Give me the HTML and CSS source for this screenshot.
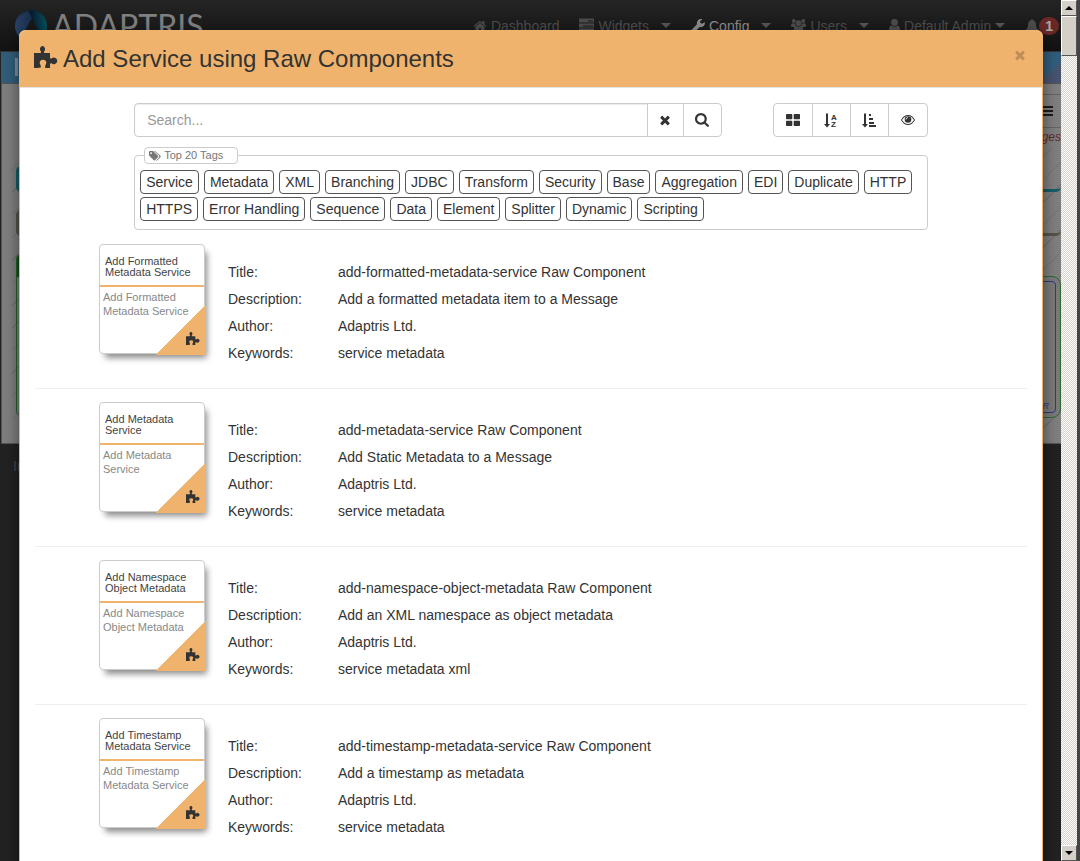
FILE: index.html
```
<!DOCTYPE html>
<html lang="en">
<head>
<meta charset="utf-8">
<title>Add Service using Raw Components</title>
<link rel="stylesheet" href="styles.css">
</head>
<body>
<svg class="defs" aria-hidden="true">
  <symbol id="puzzle" viewBox="0 0 24 22">
    <path d="M0 7h6.500q1-.2.500-1.500Q5.500 4 6 2.200 6.800 0 8.500 0t2.500 2.200Q11.500 4 10 5.500q-.5 1.300.5 1.500H16v4.500q.2 1.500 1.500 1 1.500-1.300 3.500-.7 2.300.8 2.300 3T21 18q-2 .6-3.500-.7-1.300-.5-1.500 1V22h-4.800v-1.500q-.2-1 .8-2.500 .8-1.700-.2-3-1-1.200-2.800-1.200T6.200 15q-1 1.300-.2 3 1 1.500.8 2.500V21.500Q3 22 0 22z"/>
  </symbol>
  <symbol id="times" viewBox="0 0 1792 1792"><path d="M1490 1322q0 40-28 68l-136 136q-28 28-68 28t-68-28l-294-294-294 294q-28 28-68 28t-68-28l-136-136q-28-28-28-68t28-68l294-294-294-294q-28-28-28-68t28-68l136-136q28-28 68-28t68 28l294 294 294-294q28-28 68-28t68 28l136 136q28 28 28 68t-28 68l-294 294 294 294q28 28 28 68z"/></symbol>
  <symbol id="search" viewBox="0 0 1792 1792"><path d="M1152 704q0-185-131.500-316.500t-316.500-131.500-316.500 131.500-131.500 316.500 131.500 316.500 316.500 131.500 316.500-131.500 131.500-316.500zm512 832q0 52-38 90t-90 38q-54 0-90-38l-343-342q-179 124-399 124-143 0-273.500-55.500t-225-150-150-225-55.500-273.500 55.500-273.500 150-225 225-150 273.500-55.500 273.500 55.500 225 150 150 225 55.500 273.500q0 220-124 399l343 343q37 37 37 90z"/></symbol>
  <symbol id="home" viewBox="0 0 1792 1792"><path d="M1472 992v480q0 26-19 45t-45 19h-384v-384h-256v384h-384q-26 0-45-19t-19-45v-480q0-1 .5-3t.5-3l575-474 575 474q1 2 1 6zm223-69l-62 74q-8 9-21 11h-3q-13 0-21-7l-692-577-692 577q-12 8-24 7-13-2-21-11l-62-74q-8-10-7-23.500t11-21.500l719-599q32-26 76-26t76 26l244 204v-195q0-14 9-23t23-9h192q14 0 23 9t9 23v408l219 182q10 8 11 21.500t-7 23.500z"/></symbol>
  <symbol id="bars" viewBox="0 0 15 14"><path fill-rule="evenodd" d="M0 0h15v4H0zM0 5h15v4H0zM0 10h15v4H0zM9 2v1h5V2zM4 7v1h10V7z"/></symbol>
  <symbol id="wrench" viewBox="0 0 14 14"><path d="M13.700 3.200 11 4.800 9.200 3.800V2l2.400-1.600Q9-.6 7 1.200 5.400 3 6 5.300L.6 10.700q-.8 1 0 1.900l.8.8q.9.800 1.900 0L8.700 8q2.300.6 4-1 1.600-1.700 1-3.800z"/></symbol>
  <symbol id="users" viewBox="0 0 16 14"><circle cx="3" cy="2.200" r="2.100"/><circle cx="13" cy="2.200" r="2.100"/><circle cx="8" cy="4.500" r="3"/><path d="M0 7.500Q0 4.500 1.500 4.500L4.500 5q0 2 1 2.700Q4 8 3.500 8.500H1q-1 0-1-1zM16 7.500q0-3-1.500-3l-3 .5q0 2-1 2.700 1.500.3 2 .8H15q1 0 1-1zM3 12q0-4.500 2.500-4.500 2.500 1.500 5 0Q13 7.500 13 12q0 2-2 2H5q-2 0-2-2z"/></symbol>
  <symbol id="user" viewBox="0 0 11 14"><circle cx="5.500" cy="3.500" r="3.400"/><path d="M0 11q0-4.500 2.500-4.500 3 2.500 6 0Q11 6.500 11 11q0 2-2 2H2q-2 0-2-2z"/></symbol>
  <symbol id="bell" viewBox="0 0 14 14"><path d="M7 0q1 0 1 1.200Q11 2 11 5.500q0 4 2.500 5.500 0 1-1 1h-11q-1 0-1-1Q3 9.500 3 5.500 3 2 6 1.200 6 0 7 0zM5.500 12.500h3Q8 14 7 14t-1.500-1.500z"/></symbol>
  <symbol id="tags" viewBox="0 0 12 10"><path fill-rule="evenodd" d="M0 .8Q0 0 .8 0H4l5 4.700q.5.600 0 1.200L6 9.300q-.6.500-1.200 0L0 4.500zM2 1.200a.9.900 0 1 0 .1 0z"/><path d="M5 0h1l5.500 4.700q.5.600 0 1.200L8.200 9.500q-.5.400-1 0L10 6.200q.6-.9 0-1.700z"/></symbol>
  <symbol id="grid" viewBox="0 0 14 12"><path d="M.8 0h4.700q.8 0 .8.800v3.700q0 .8-.8.800H.8q-.8 0-.8-.8V.8Q0 0 .8 0zM8.500 0h4.700q.8 0 .8.800v3.700q0 .8-.8.800H8.500q-.8 0-.8-.8V.8q0-.8.800-.8zM.8 6.700h4.700q.8 0 .8.800v3.700q0 .8-.8.800H.8q-.8 0-.8-.8V7.500q0-.8.800-.8zM8.500 6.700h4.700q.8 0 .8.800v3.700q0 .8-.8.800H8.500q-.8 0-.8-.8V7.500q0-.8.800-.8z"/></symbol>
  <symbol id="down" viewBox="0 0 6 14"><path d="M2 0h2v10.500h2L3 14 0 10.500h2z"/></symbol>
  <symbol id="eye" viewBox="0 0 14 10"><path fill-rule="evenodd" d="M7 0q4.300 0 7 5-2.700 5-7 5T0 5q2.700-5 7-5zM7 .9Q3.400 1 1.100 5q2.300 4 5.900 4t5.900-4Q10.600 1 7 .9z"/><circle cx="7" cy="4.500" r="3.300"/><path d="M5 4.500Q5 2.600 7 2.500" fill="none" stroke="#fff" stroke-width=".8"/></symbol>
</svg>

<div class="shell">
  <div class="viewport">
    <div class="app">
      <header class="navbar">
        <a class="brand" href="#">
          <svg class="brand-mark" viewBox="0 0 32 32" aria-hidden="true">
            <defs>
              <linearGradient id="lg1" x1="0" x2="1"><stop offset="0" stop-color="#2b4468"/><stop offset=".5" stop-color="#071a2e"/><stop offset="1" stop-color="#06505f"/></linearGradient>
            </defs>
            <circle cx="16" cy="16" r="16" fill="url(#lg1)"/>
            <path d="M17 8 29 32H5z" fill="#181818"/>
            <path d="M13 1Q4 5 1 16q0 8 4 13L17 8z" fill="#2a4266" fill-opacity=".5"/>
          </svg>
          <span class="brand-name">ADAPTRIS</span>
        </a>
        <nav class="nav">
          <a class="nav-link" href="#"><svg class="ico14"><use href="#home"/></svg>Dashboard</a>
          <a class="nav-link drop" href="#"><svg class="ico15"><use href="#bars"/></svg>Widgets<i class="caret"></i></a>
          <a class="nav-link drop active" href="#"><svg class="ico14"><use href="#wrench"/></svg>Config<i class="caret"></i></a>
          <a class="nav-link drop" href="#"><svg class="ico15"><use href="#users"/></svg>Users<i class="caret"></i></a>
          <a class="nav-link user" href="#"><svg class="ico11"><use href="#user"/></svg>Default Admin<i class="caret"></i></a>
          <a class="nav-link alerts" href="#" aria-label="Notifications"><svg class="ico14"><use href="#bell"/></svg><span class="badge">1</span></a>
        </nav>
      </header>
      <div class="banner"><span class="banner-mark"></span></div>
      <div class="workspace">
        <div class="tools"><button class="menu" aria-label="Menu"></button></div>
        <div class="changes">changes</div>
        <div class="canvas">
          <div class="lane lane-teal"></div>
          <div class="lane lane-olive"></div>
          <div class="lane lane-green"></div>
          <div class="node"><span class="node-name">R</span></div>
        </div>
      </div>
      <footer class="footer">Interlok</footer>
    </div>

    <div class="overlay">
      <section class="modal" role="dialog" aria-labelledby="modal-title">
        <header class="modal-header">
          <h4 class="modal-title" id="modal-title"><svg class="ico-title"><use href="#puzzle"/></svg>Add Service using Raw Components</h4>
          <button class="close" aria-label="Close"><svg class="ico14"><use href="#times"/></svg></button>
        </header>
        <div class="modal-body">
          <div class="filters">
            <div class="filter-row">
              <form class="search">
                <input class="search-input" type="text" placeholder="Search..." aria-label="Search">
                <button class="btn btn-clear" type="button" aria-label="Clear"><svg class="ico14"><use href="#times"/></svg></button>
                <button class="btn btn-find" type="button" aria-label="Search"><svg class="ico15"><use href="#search"/></svg></button>
              </form>
              <div class="views">
                <button class="btn" aria-label="Grid view"><svg class="ico-grid"><use href="#grid"/></svg></button>
                <button class="btn" aria-label="Sort by name"><svg class="ico-sort" viewBox="0 0 14 15"><use href="#down" x="0" y="0" width="6" height="15"/><text x="7" y="7">A</text><text x="7" y="14">Z</text></svg></button>
                <button class="btn" aria-label="Sort by size"><svg class="ico-sort" viewBox="0 0 14 15"><use href="#down" x="0" y="0" width="6" height="15"/><path d="M7 1h2v2H7zM7 5h4v2H7zM7 9h5v2H7zM7 12h7v2H7z"/></svg></button>
                <button class="btn" aria-label="Preview"><svg class="ico-eye"><use href="#eye"/></svg></button>
              </div>
            </div>
            <fieldset class="tags">
              <legend class="tags-legend"><svg class="ico-tags"><use href="#tags"/></svg>Top 20 Tags</legend>
              <div class="tag-list">
                <button class="tag">Service</button><button class="tag">Metadata</button><button class="tag">XML</button><button class="tag">Branching</button><button class="tag">JDBC</button><button class="tag">Transform</button><button class="tag">Security</button><button class="tag">Base</button><button class="tag">Aggregation</button><button class="tag">EDI</button><button class="tag">Duplicate</button><button class="tag">HTTP</button><button class="tag">HTTPS</button><button class="tag">Error Handling</button><button class="tag">Sequence</button><button class="tag">Data</button><button class="tag">Element</button><button class="tag">Splitter</button><button class="tag">Dynamic</button><button class="tag">Scripting</button>
              </div>
            </fieldset>
          </div>

          <div class="list">
            <article class="item">
              <div class="card"><div class="card-title">Add Formatted Metadata Service</div><div class="card-text">Add Formatted Metadata Service</div><span class="corner"><svg class="ico-corner"><use href="#puzzle"/></svg></span></div>
              <dl class="facts"><dt>Title:</dt><dd>add-formatted-metadata-service Raw Component</dd><dt>Description:</dt><dd>Add a formatted metadata item to a Message</dd><dt>Author:</dt><dd>Adaptris Ltd.</dd><dt>Keywords:</dt><dd>service metadata</dd></dl>
            </article>
            <article class="item">
              <div class="card"><div class="card-title">Add Metadata Service</div><div class="card-text">Add Metadata Service</div><span class="corner"><svg class="ico-corner"><use href="#puzzle"/></svg></span></div>
              <dl class="facts"><dt>Title:</dt><dd>add-metadata-service Raw Component</dd><dt>Description:</dt><dd>Add Static Metadata to a Message</dd><dt>Author:</dt><dd>Adaptris Ltd.</dd><dt>Keywords:</dt><dd>service metadata</dd></dl>
            </article>
            <article class="item">
              <div class="card"><div class="card-title">Add Namespace Object Metadata</div><div class="card-text">Add Namespace Object Metadata</div><span class="corner"><svg class="ico-corner"><use href="#puzzle"/></svg></span></div>
              <dl class="facts"><dt>Title:</dt><dd>add-namespace-object-metadata Raw Component</dd><dt>Description:</dt><dd>Add an XML namespace as object metadata</dd><dt>Author:</dt><dd>Adaptris Ltd.</dd><dt>Keywords:</dt><dd>service metadata xml</dd></dl>
            </article>
            <article class="item">
              <div class="card"><div class="card-title">Add Timestamp Metadata Service</div><div class="card-text">Add Timestamp Metadata Service</div><span class="corner"><svg class="ico-corner"><use href="#puzzle"/></svg></span></div>
              <dl class="facts"><dt>Title:</dt><dd>add-timestamp-metadata-service Raw Component</dd><dt>Description:</dt><dd>Add a timestamp as metadata</dd><dt>Author:</dt><dd>Adaptris Ltd.</dd><dt>Keywords:</dt><dd>service metadata</dd></dl>
            </article>
          </div>
        </div>
      </section>
    </div>
  </div>
  <div class="scrollbar" aria-hidden="true">
    <div class="scroll-btn"><i class="arrow-up"></i></div>
    <div class="scroll-thumb"></div>
    <div class="scroll-btn scroll-end"><i class="arrow-down"></i></div>
  </div>
</div>
</body>
</html>
```
FILE: styles.css
```
* { box-sizing: border-box; }
body {
  margin: 0;
  font-family: "Liberation Sans", Arial, sans-serif;
  font-size: 14px;
  line-height: 20px;
  color: #333;
  background: #444;
}
button, input { font: inherit; color: inherit; }
svg { fill: currentColor; flex: none; }
.defs { position: absolute; width: 0; height: 0; }
.ico11 { width: 11px; height: 14px; }
.ico14 { width: 14px; height: 14px; }
.ico15 { width: 15px; height: 15px; }

.shell { display: flex; height: 100vh; overflow: hidden; padding-right: 3px; }
.viewport { position: relative; flex: 1; overflow: hidden; }

/* page behind the dialog */
.app { display: flex; flex-direction: column; height: 100%; background: #222; }
.navbar {
  display: flex;
  justify-content: space-between;
  height: 52px;
  padding: 0 2px 0 15px;
  background: linear-gradient(#242424, #121212);
  border-bottom: 1px solid #333;
}
.brand { display: flex; gap: 5px; padding-top: 10px; text-decoration: none; color: #808080; }
.brand-mark { width: 32px; height: 32px; }
.brand-name { font: 400 32px/32px Lato, sans-serif; }
.nav { display: flex; align-items: center; gap: 20px; color: #4c4c4c; }
.nav-link { display: flex; align-items: center; gap: 4px; color: inherit; text-decoration: none; }
.nav-link.active { color: #8c8c8c; }
.caret { border: 5px solid transparent; border-top-color: #555; border-bottom: 0; }
.drop .caret { margin-left: 8px; }
.alerts { gap: 0; }
.badge {
  padding: 0 6px;
  border-radius: 10px;
  background: #6a2828;
  color: #aaa;
  font-weight: bold;
  line-height: 18px;
}
.banner {
  height: 31px;
  margin-left: 1px;
  padding: 6px 14px;
  background: linear-gradient(135deg, #315d7b 98%, #47546f 98%);
}
.banner-mark { display: block; width: 3px; height: 18px; background: #7c8f9c; }
.workspace {
  display: flex;
  flex-direction: column;
  height: 361px;
  margin-left: 1px;
  border: solid #555;
  border-width: 1px 0 1px 1px;
  background: #7f7f7f;
}
.tools {
  display: flex;
  justify-content: flex-end;
  align-items: center;
  height: 34px;
  margin-top: 10px;
  padding-right: 8px;
  background: linear-gradient(90deg, transparent 90%, #646464 90%) 0 0 / 100% 1px no-repeat, linear-gradient(90deg, transparent 90%, #646464 90%) 0 100% / 100% 1px no-repeat;
}
.menu {
  width: 16px;
  height: 10px;
  padding: 0;
  border: solid #1c1c1c;
  border-width: 2px 0;
  background: linear-gradient(transparent 2px, #1c1c1c 2px, #1c1c1c 4px, transparent 4px);
}
.changes { text-align: right; font-size: 12px; line-height: 18px; font-style: italic; color: #632a2a; }
.canvas {
  position: relative;
  flex: 1;
  margin: 2px 0 10px 10px;
  overflow: hidden;
  background: repeating-linear-gradient(135deg, transparent 0 15px, #727272 15px 16px);
}
.lane { position: absolute; left: 4px; right: 0; border-radius: 5px; }
.lane-teal { top: 18px; height: 26px; background: linear-gradient(90deg, #145e66 80%, transparent 80%); border-bottom: 3px solid #145e66; }
.lane-olive { top: 62px; height: 26px; background: linear-gradient(90deg, #55534a 80%, transparent 80%); border-bottom: 3px solid #55534a; }
.lane-green { top: 106px; right: 50%; height: 162px; border: 1px solid #22632a; background: linear-gradient(#115215 22px, transparent 22px); }
.node {
  position: absolute;
  top: 128px;
  right: 0;
  width: 200px;
  height: 142px;
  padding: 4px;
  border: 1px solid #2b6a2f;
  border-radius: 9px;
  background: #7a7a7a;
}
.node-name {
  display: flex;
  align-items: flex-end;
  justify-content: flex-end;
  height: 100%;
  padding-right: 6px;
  border: 1px solid #343a80;
  border-radius: 4px;
  font-size: 9px;
  line-height: 12px;
  font-style: italic;
  color: #343a80;
}
.footer { flex: 1; padding: 12px 13px; color: #43484e; }

/* dialog */
.overlay { position: absolute; inset: 0; overflow: hidden; padding: 30px 18px 0 19px; }
.modal {
  border: 1px solid #f0b36d;
  border-radius: 6px;
  background: #fff;
  box-shadow: 0 5px 15px rgba(0, 0, 0, .5);
}
.modal-header {
  display: flex;
  justify-content: space-between;
  align-items: flex-start;
  padding: 15px 15px 15px 14px;
  border-bottom: 1px solid #e5e5e5;
  border-radius: 5px 5px 0 0;
  background: #f0b36d;
}
.modal-title { display: flex; gap: 5px; margin: 0; font-size: 24px; font-weight: normal; line-height: 26px; }
.ico-title { width: 24px; height: 22px; }
.close {
  display: flex;
  padding: 2px 0;
  border: 0;
  background: none;
  color: #000;
  opacity: .2;
}
.modal-body { padding: 15px; }
.filters { padding: 0 10%; }
.filter-row { display: flex; gap: 51px; }
.search, .views { display: flex; height: 34px; border: 1px solid #ccc; border-radius: 4px; }
.search { flex: 1; }
.search-input {
  flex: 1;
  min-width: 0;
  padding: 6px 12px;
  border: 0;
  border-radius: 4px 0 0 4px;
  background: none;
  box-shadow: inset 0 1px 1px rgba(0, 0, 0, .08);
}
.search-input::placeholder { color: #999; }
.btn {
  display: flex;
  align-items: center;
  justify-content: center;
  width: 38px;
  padding: 0;
  border: 0;
  border-left: 1px solid #ccc;
  background: none;
}
.btn-clear { width: 36px; }
.views .btn:last-child { width: 39px; }
.views .btn:first-child { border-left: 0; }
.ico-grid { width: 14px; height: 12px; }
.ico-sort { width: 14px; height: 15px; overflow: visible; font-size: 8px; font-weight: bold; }
.ico-eye { width: 14px; height: 10px; }

.tags { min-width: 0; margin: 10px 0 0; padding: 6px 5px 8px; border: 1px solid #ccc; border-radius: 4px; }
.tags-legend {
  display: flex;
  align-items: center;
  gap: 3px;
  height: 17px;
  margin-left: 4px;
  padding: 0 14px 0 4px;
  border: 1px solid #ccc;
  border-radius: 4px;
  background: #fff;
  font-size: 11px;
  line-height: 15px;
  color: #777;
}
.ico-tags { width: 12px; height: 10px; }
.tag-list { display: flex; flex-wrap: wrap; gap: 3px 5px; }
.tag { height: 24px; padding: 0 5px; border: 1px solid #555; border-radius: 4px; background: #fff; line-height: 22px; }

.list { margin-top: 14px; }
.item {
  display: flex;
  align-items: flex-start;
  gap: 23px;
  margin-bottom: 13px;
  padding: 0 0 21px 64px;
  border-bottom: 1px solid #eee;
}
.card {
  position: relative;
  width: 106px;
  height: 110px;
  border: 1px solid #ccc;
  border-radius: 4px;
  background: #fff;
  box-shadow: 4px 6px 6px -2px rgba(0, 0, 0, .45);
  font-size: 11px;
}
.card-title { height: 42px; padding: 11px 5px 0; border-bottom: 2px solid #f0b36d; line-height: 11px; color: #444; }
.card-text { padding: 3px 3px 0; line-height: 14px; color: #888; }
.corner {
  position: absolute;
  right: -2px;
  bottom: -2px;
  display: flex;
  align-items: flex-end;
  justify-content: flex-end;
  width: 50px;
  height: 51px;
  padding: 0 6px 10px 0;
  background: linear-gradient(to bottom right, transparent 50%, #f0b36d 50%);
}
.ico-corner { width: 14px; height: 13px; }
.facts { flex: 1; display: grid; grid-template-columns: 110px 1fr; margin: 0; padding-top: 15px; line-height: 27px; }
.facts dd { margin: 0; }

/* classic scrollbar */
.scrollbar {
  display: flex;
  flex-direction: column;
  width: 16px;
  background: repeating-conic-gradient(#fff 0 25%, #d4d0c8 0 50%) 0 0 / 2px 2px;
}
.scroll-btn, .scroll-thumb {
  border: 1px solid #fff;
  border-right-color: #555;
  border-bottom-color: #555;
  background: #d4d0c8;
}
.scroll-btn { display: flex; align-items: center; justify-content: center; height: 16px; }
.scroll-thumb { height: 40px; }
.scroll-end { margin-top: auto; }
.arrow-up { border: 4px solid transparent; border-bottom-color: #000; border-top: 0; }
.arrow-down { border: 4px solid transparent; border-top-color: #000; border-bottom: 0; }
```
